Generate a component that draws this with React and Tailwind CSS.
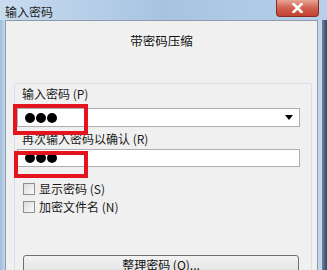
import React from 'react';

const cjk = { fontFamily: '"Noto Sans CJK SC", "Noto Sans", sans-serif' };

const Dots = () => (
    <div className="flex items-center gap-[1px]">
        <span className="w-[10px] h-[10px] rounded-full bg-black" />
        <span className="w-[10px] h-[10px] rounded-full bg-black" />
        <span className="w-[10px] h-[10px] rounded-full bg-black" />
    </div>
);

const Checkbox = ({ label }) => (
    <div className="flex items-center h-[13px] ml-[8px]">
        <span className="w-[12px] h-[12px] border border-[#8e8f8f] bg-gradient-to-br from-[#dcdcdc] to-[#fbfbfb]" />
        <span className="ml-[4px] text-[12px] leading-[14px] text-[#1a1a1a]">{label}</span>
    </div>
);

const App = () => {
    return (
        <div
            className="relative w-[327px] h-[270px] overflow-hidden flex flex-col bg-gradient-to-b from-[#bcd3ec] to-[#a9c5e3]"
            style={cjk}
        >
            {/* title bar */}
            <div className="h-[23px] flex items-start bg-gradient-to-r from-[#c9dcef] via-[#a8c3e2] to-[#b7cfea]">
                <span className="ml-[5px] mt-[4px] text-[12px] leading-[16px] text-[#1e1e1e]">输入密码</span>
                <div className="ml-auto mr-[8px] w-[43px] h-[17px] rounded-b-[4px] border border-t-0 border-[#8b2e22] bg-gradient-to-b from-[#e7a597] via-[#d0604f] to-[#c2412f] flex items-center justify-center">
                    <svg width="11" height="10" viewBox="0 0 11 10">
                        <path d="M1.5 1 L9.5 9 M9.5 1 L1.5 9" stroke="#ffffff" strokeWidth="2.6" strokeLinecap="square" />
                    </svg>
                </div>
            </div>

            <div className="flex flex-1">
                <div className="w-[5px] bg-gradient-to-r from-[#9fbbd9] to-[#c3d8ee]" />

                {/* dialog panel */}
                <div className="w-[313px] border border-[#8e9aa8] border-b-0 bg-[#f0f0f0] flex flex-col">
                    <div className="mt-[12px] h-[16px] text-center text-[12.5px] leading-[16px] text-[#111]">带密码压缩</div>

                    {/* group box */}
                    <div className="mt-[34px] ml-[8px] mr-[5px] flex-1 border border-b-0 border-[#d5dfe5] rounded-t-[3px] flex flex-col">
                        <div className="mt-[3px] pl-[7px] h-[14px] text-[12px] leading-[14px] text-[#1a1a1a]">输入密码 (P)</div>
                        <div className="mt-[7px] ml-[2px] mr-[11px] h-[19px] bg-white border border-[#abadb3] flex items-center pl-[7px] pr-[6px]">
                            <Dots />
                            <svg className="ml-auto" width="8" height="5" viewBox="0 0 8 5">
                                <path d="M0 0 H8 L4 5 Z" fill="#000" />
                            </svg>
                        </div>

                        <div className="mt-[5px] pl-[7px] h-[14px] text-[12px] leading-[14px] text-[#1a1a1a]">再次输入密码以确认 (R)</div>
                        <div className="mt-[3px] ml-[2px] mr-[11px] h-[18px] bg-white border border-[#abadb3] flex items-center pl-[7px]">
                            <Dots />
                        </div>

                        <div className="mt-[15px]">
                            <Checkbox label="显示密码 (S)" />
                        </div>
                        <div className="mt-[5px]">
                            <Checkbox label="加密文件名 (N)" />
                        </div>

                        <div className="mt-[42px] ml-[8px] mr-[12px] h-[23px] rounded-[3px] border border-[#707070] bg-gradient-to-b from-[#f3f3f3] to-[#dddddd] flex justify-center">
                            <span className="mt-[2px] text-[12px] leading-[14px] text-[#111]">整理密码 (O)...</span>
                        </div>
                    </div>
                </div>

                <div className="flex-1 flex">
                    <div className="w-[4px] bg-[#c4d8ed]" />
                    <div className="flex-1 bg-gradient-to-r from-[#6d86a3] to-[#34485f]" />
                </div>
            </div>

            {/* red annotation boxes */}
            <div className="absolute left-[13px] top-[104px] w-[75px] h-[31px] border-[4px] border-[#e3141e]" />
            <div className="absolute left-[14px] top-[151px] w-[74px] h-[27px] border-[4px] border-[#e3141e]" />
        </div>
    );
};

export default App;
